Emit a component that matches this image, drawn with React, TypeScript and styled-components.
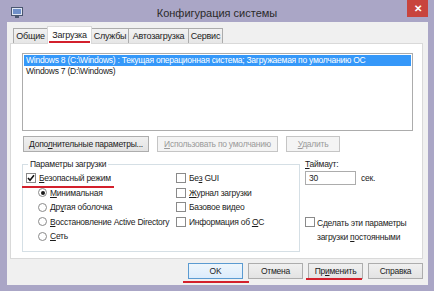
import React from "react";
import styled, { createGlobalStyle, css } from "styled-components";

const RED = "#d3202c";

const GlobalStyle = createGlobalStyle`
  html, body {
    margin: 0;
    padding: 0;
    background: #aaa6c6;
  }
  body {
    font-family: "Liberation Sans", Arial, sans-serif;
    color: #1c1c1c;
  }
`;

const Window = styled.div`
  width: 434px;
  height: 291px;
  background: #aaa6c6;
  display: flex;
  flex-direction: column;
  overflow: hidden;
`;

const TitleBar = styled.div`
  height: 22px;
  flex: none;
  display: grid;
  grid-template-columns: 1fr auto 1fr;
  align-items: start;
`;

const AppIcon = styled.svg`
  margin: 7px 0 0 11px;
`;

const Title = styled.div`
  padding-top: 6px;
  font-size: 11px;
  line-height: 14px;
  color: #2a2a2a;
`;

const CloseButton = styled.div`
  justify-self: end;
  margin-right: 6px;
  width: 21px;
  height: 17px;
  background: #c8443d;
  color: #fff;
  font-size: 10px;
  font-weight: bold;
  display: flex;
  align-items: center;
  justify-content: center;
`;

const Client = styled.div`
  flex: 1;
  margin: 0 6px 6px 7px;
  background: #f0f0f0;
  display: flex;
  flex-direction: column;
  padding: 4px 5px 5px 3px;
  font-size: 8.5px;
  letter-spacing: -0.25px;
`;

const TabsRow = styled.div`
  height: 17px;
  display: flex;
  align-items: flex-end;
  padding-left: 3px;
`;

const Tab = styled.div<{ $w: number; $active?: boolean }>`
  width: ${(p) => p.$w}px;
  height: 15px;
  box-sizing: border-box;
  border: 1px solid #acacac;
  border-bottom: none;
  margin-right: -1px;
  background: linear-gradient(#f2f2f2, #e6e6e6);
  display: flex;
  align-items: center;
  justify-content: center;
  font-size: 9px;
  ${(p) =>
    p.$active &&
    css`
      position: relative;
      z-index: 1;
      height: 18px;
      margin-bottom: -1px;
      background: #fff;
      border-color: #d9d9d9;
      padding-bottom: 2px;
      &::after {
        content: "";
        position: absolute;
        left: 1px;
        right: 1px;
        bottom: 1px;
        height: 2px;
        background: ${RED};
      }
    `}
`;

const Panel = styled.div`
  height: 216px;
  box-sizing: border-box;
  border: 1px solid #d9d9d9;
  background: #fff;
  padding: 9px 9px 0 11px;
  display: flex;
  flex-direction: column;
`;

const ListBox = styled.div`
  height: 78px;
  box-sizing: border-box;
  border: 1px solid #acacac;
  background: #fff;
  padding: 1px;
`;

const ListItem = styled.div<{ $selected?: boolean }>`
  height: 11px;
  line-height: 11px;
  padding-left: 2px;
  white-space: nowrap;
  background: ${(p) => (p.$selected ? "#3598f9" : "transparent")};
  color: ${(p) => (p.$selected ? "#fff" : "#1c1c1c")};
`;

const ButtonRow = styled.div`
  margin-top: 5px;
  display: flex;
  gap: 8px;
  padding-left: 1px;
`;

const Button = styled.div<{
  $w: number;
  $disabled?: boolean;
  $default?: boolean;
  $mark?: "below" | "edge";
}>`
  position: relative;
  width: ${(p) => p.$w}px;
  height: 16px;
  box-sizing: border-box;
  border: 1px solid ${(p) => (p.$disabled ? "#c5c5c5" : p.$default ? "#5b9bd1" : "#adadad")};
  background: ${(p) =>
    p.$disabled ? "#f4f4f4" : p.$default ? "linear-gradient(#eef6fc, #dcecfc)" : "linear-gradient(#f0f0f0, #e3e3e3)"};
  color: ${(p) => (p.$disabled ? "#9a9a9a" : "#1c1c1c")};
  display: flex;
  align-items: center;
  justify-content: center;
  white-space: nowrap;
  ${(p) =>
    p.$mark === "below" &&
    css`
      &::after {
        content: "";
        position: absolute;
        left: -6px;
        right: -7px;
        bottom: -5px;
        height: 2px;
        background: ${RED};
      }
    `}
  ${(p) =>
    p.$mark === "edge" &&
    css`
      &::after {
        content: "";
        position: absolute;
        left: -3px;
        right: 0;
        bottom: -2px;
        height: 2px;
        background: ${RED};
      }
    `}
`;

const Lower = styled.div`
  margin-top: 7px;
  display: flex;
  gap: 5px;
`;

const Group = styled.fieldset`
  width: 278px;
  height: 93px;
  box-sizing: border-box;
  margin: 0;
  padding: 1px 0 0 3px;
  border: 1px solid #d5dfe5;
  display: grid;
  grid-template-columns: 150px 1fr;
  grid-template-rows: repeat(5, 14.5px);
  grid-auto-flow: column;
  align-content: start;
`;

const Legend = styled.legend`
  padding: 0 2px;
  margin-left: 2px;
  line-height: 11px;
`;

const Row = styled.div<{ $indent?: boolean; $mark?: boolean }>`
  position: relative;
  display: flex;
  align-items: center;
  gap: 3px;
  white-space: nowrap;
  padding-left: ${(p) => (p.$indent ? 12 : 0)}px;
  ${(p) =>
    p.$mark &&
    css`
      justify-self: start;
      &::after {
        content: "";
        position: absolute;
        left: -4px;
        right: -3px;
        bottom: -2px;
        height: 2px;
        background: ${RED};
      }
    `}
`;

const Box = styled.span`
  width: 10px;
  height: 10px;
  flex: none;
  box-sizing: border-box;
  border: 1px solid #8a8a8a;
  background: #fff;
  display: flex;
  align-items: center;
  justify-content: center;
`;

const Radio = styled.span<{ $on?: boolean }>`
  width: 9px;
  height: 9px;
  flex: none;
  box-sizing: border-box;
  border-radius: 50%;
  border: 1px solid #8a8a8a;
  background: #fff;
  display: flex;
  align-items: center;
  justify-content: center;
  &::before {
    content: "";
    width: 4px;
    height: 4px;
    border-radius: 50%;
    background: ${(p) => (p.$on ? "#1a1a1a" : "transparent")};
  }
`;

const Side = styled.div`
  flex: 1;
  display: flex;
  flex-direction: column;
`;

const SideLabel = styled.div`
  line-height: 11px;
`;

const TimeoutRow = styled.div`
  margin-top: 1px;
  display: flex;
  align-items: center;
  gap: 5px;
`;

const Input = styled.div`
  width: 51px;
  height: 14px;
  box-sizing: border-box;
  border: 1px solid #acacac;
  padding-left: 3px;
  line-height: 12px;
  background: #fff;
`;

const PersistRow = styled.div`
  margin-top: 31px;
  display: flex;
  align-items: flex-start;
  gap: 2px;
  line-height: 14px;
  white-space: nowrap;
  & > span:first-child {
    margin-top: 1px;
  }
`;

const Footer = styled.div`
  margin-top: 4px;
  display: flex;
  justify-content: flex-end;
  gap: 5px;
`;

const U = styled.span`
  text-decoration: underline;
`;

const Check = () => (
  <svg width="8" height="8" viewBox="0 0 8 8">
    <path d="M1 4 L3 6.3 L7 1.3" fill="none" stroke="#111" strokeWidth="1.6" />
  </svg>
);

export default function App() {
  return (
    <>
      <GlobalStyle />
      <Window>
        <TitleBar>
          <AppIcon width="12" height="11" viewBox="0 0 12 11">
            <rect x="0.5" y="0.5" width="11" height="8" fill="#dfe6f3" stroke="#4a5670" />
            <rect x="2" y="2" width="8" height="5" fill="#6f8fc9" />
            <rect x="4" y="9" width="4" height="2" fill="#4a5670" />
          </AppIcon>
          <Title>Конфигурация системы</Title>
          <CloseButton>✕</CloseButton>
        </TitleBar>
        <Client>
          <TabsRow>
            <Tab $w={35}>Общие</Tab>
            <Tab $w={45} $active>
              Загрузка
            </Tab>
            <Tab $w={38}>Службы</Tab>
            <Tab $w={61}>Автозагрузка</Tab>
            <Tab $w={35}>Сервис</Tab>
          </TabsRow>
          <Panel>
            <ListBox>
              <ListItem $selected>
                Windows 8 (C:\Windows) : Текущая операционная система; Загружаемая по умолчанию ОС
              </ListItem>
              <ListItem>Windows 7 (D:\Windows)</ListItem>
            </ListBox>
            <ButtonRow>
              <Button $w={126}>
                <span>
                  Допо<U>л</U>нительные параметры...
                </span>
              </Button>
              <Button $w={121} $disabled>
                <span>
                  <U>И</U>спользовать по умолчанию
                </span>
              </Button>
              <Button $w={54} $disabled>
                <span>
                  <U>У</U>далить
                </span>
              </Button>
            </ButtonRow>
            <Lower>
              <Group>
                <Legend>Параметры загрузки</Legend>
                <Row $mark>
                  <Box>
                    <Check />
                  </Box>
                  <span>
                    <U>Б</U>езопасный режим
                  </span>
                </Row>
                <Row $indent>
                  <Radio $on />
                  <span>
                    <U>М</U>инимальная
                  </span>
                </Row>
                <Row $indent>
                  <Radio />
                  <span>
                    Др<U>у</U>гая оболочка
                  </span>
                </Row>
                <Row $indent>
                  <Radio />
                  <span>
                    <U>В</U>осстановление Active Directory
                  </span>
                </Row>
                <Row $indent>
                  <Radio />
                  <span>
                    <U>С</U>еть
                  </span>
                </Row>
                <Row>
                  <Box />
                  <span>
                    Бе<U>з</U> GUI
                  </span>
                </Row>
                <Row>
                  <Box />
                  <span>
                    <U>Ж</U>урнал загрузки
                  </span>
                </Row>
                <Row>
                  <Box />
                  <span>Базовое видео</span>
                </Row>
                <Row>
                  <Box />
                  <span>
                    Информация об <U>О</U>С
                  </span>
                </Row>
              </Group>
              <Side>
                <SideLabel>
                  <U>Т</U>аймаут:
                </SideLabel>
                <TimeoutRow>
                  <Input>30</Input>
                  <span>сек.</span>
                </TimeoutRow>
                <PersistRow>
                  <Box />
                  <span>
                    Сделать эти параметры
                    <br />
                    загрузки <U>п</U>остоянными
                  </span>
                </PersistRow>
              </Side>
            </Lower>
          </Panel>
          <Footer>
            <Button $w={55} $default $mark="below">
              OK
            </Button>
            <Button $w={55}>Отмена</Button>
            <Button $w={55} $mark="edge">
              <span>
                Пр<U>и</U>менить
              </span>
            </Button>
            <Button $w={55}>Справка</Button>
          </Footer>
        </Client>
      </Window>
    </>
  );
}
